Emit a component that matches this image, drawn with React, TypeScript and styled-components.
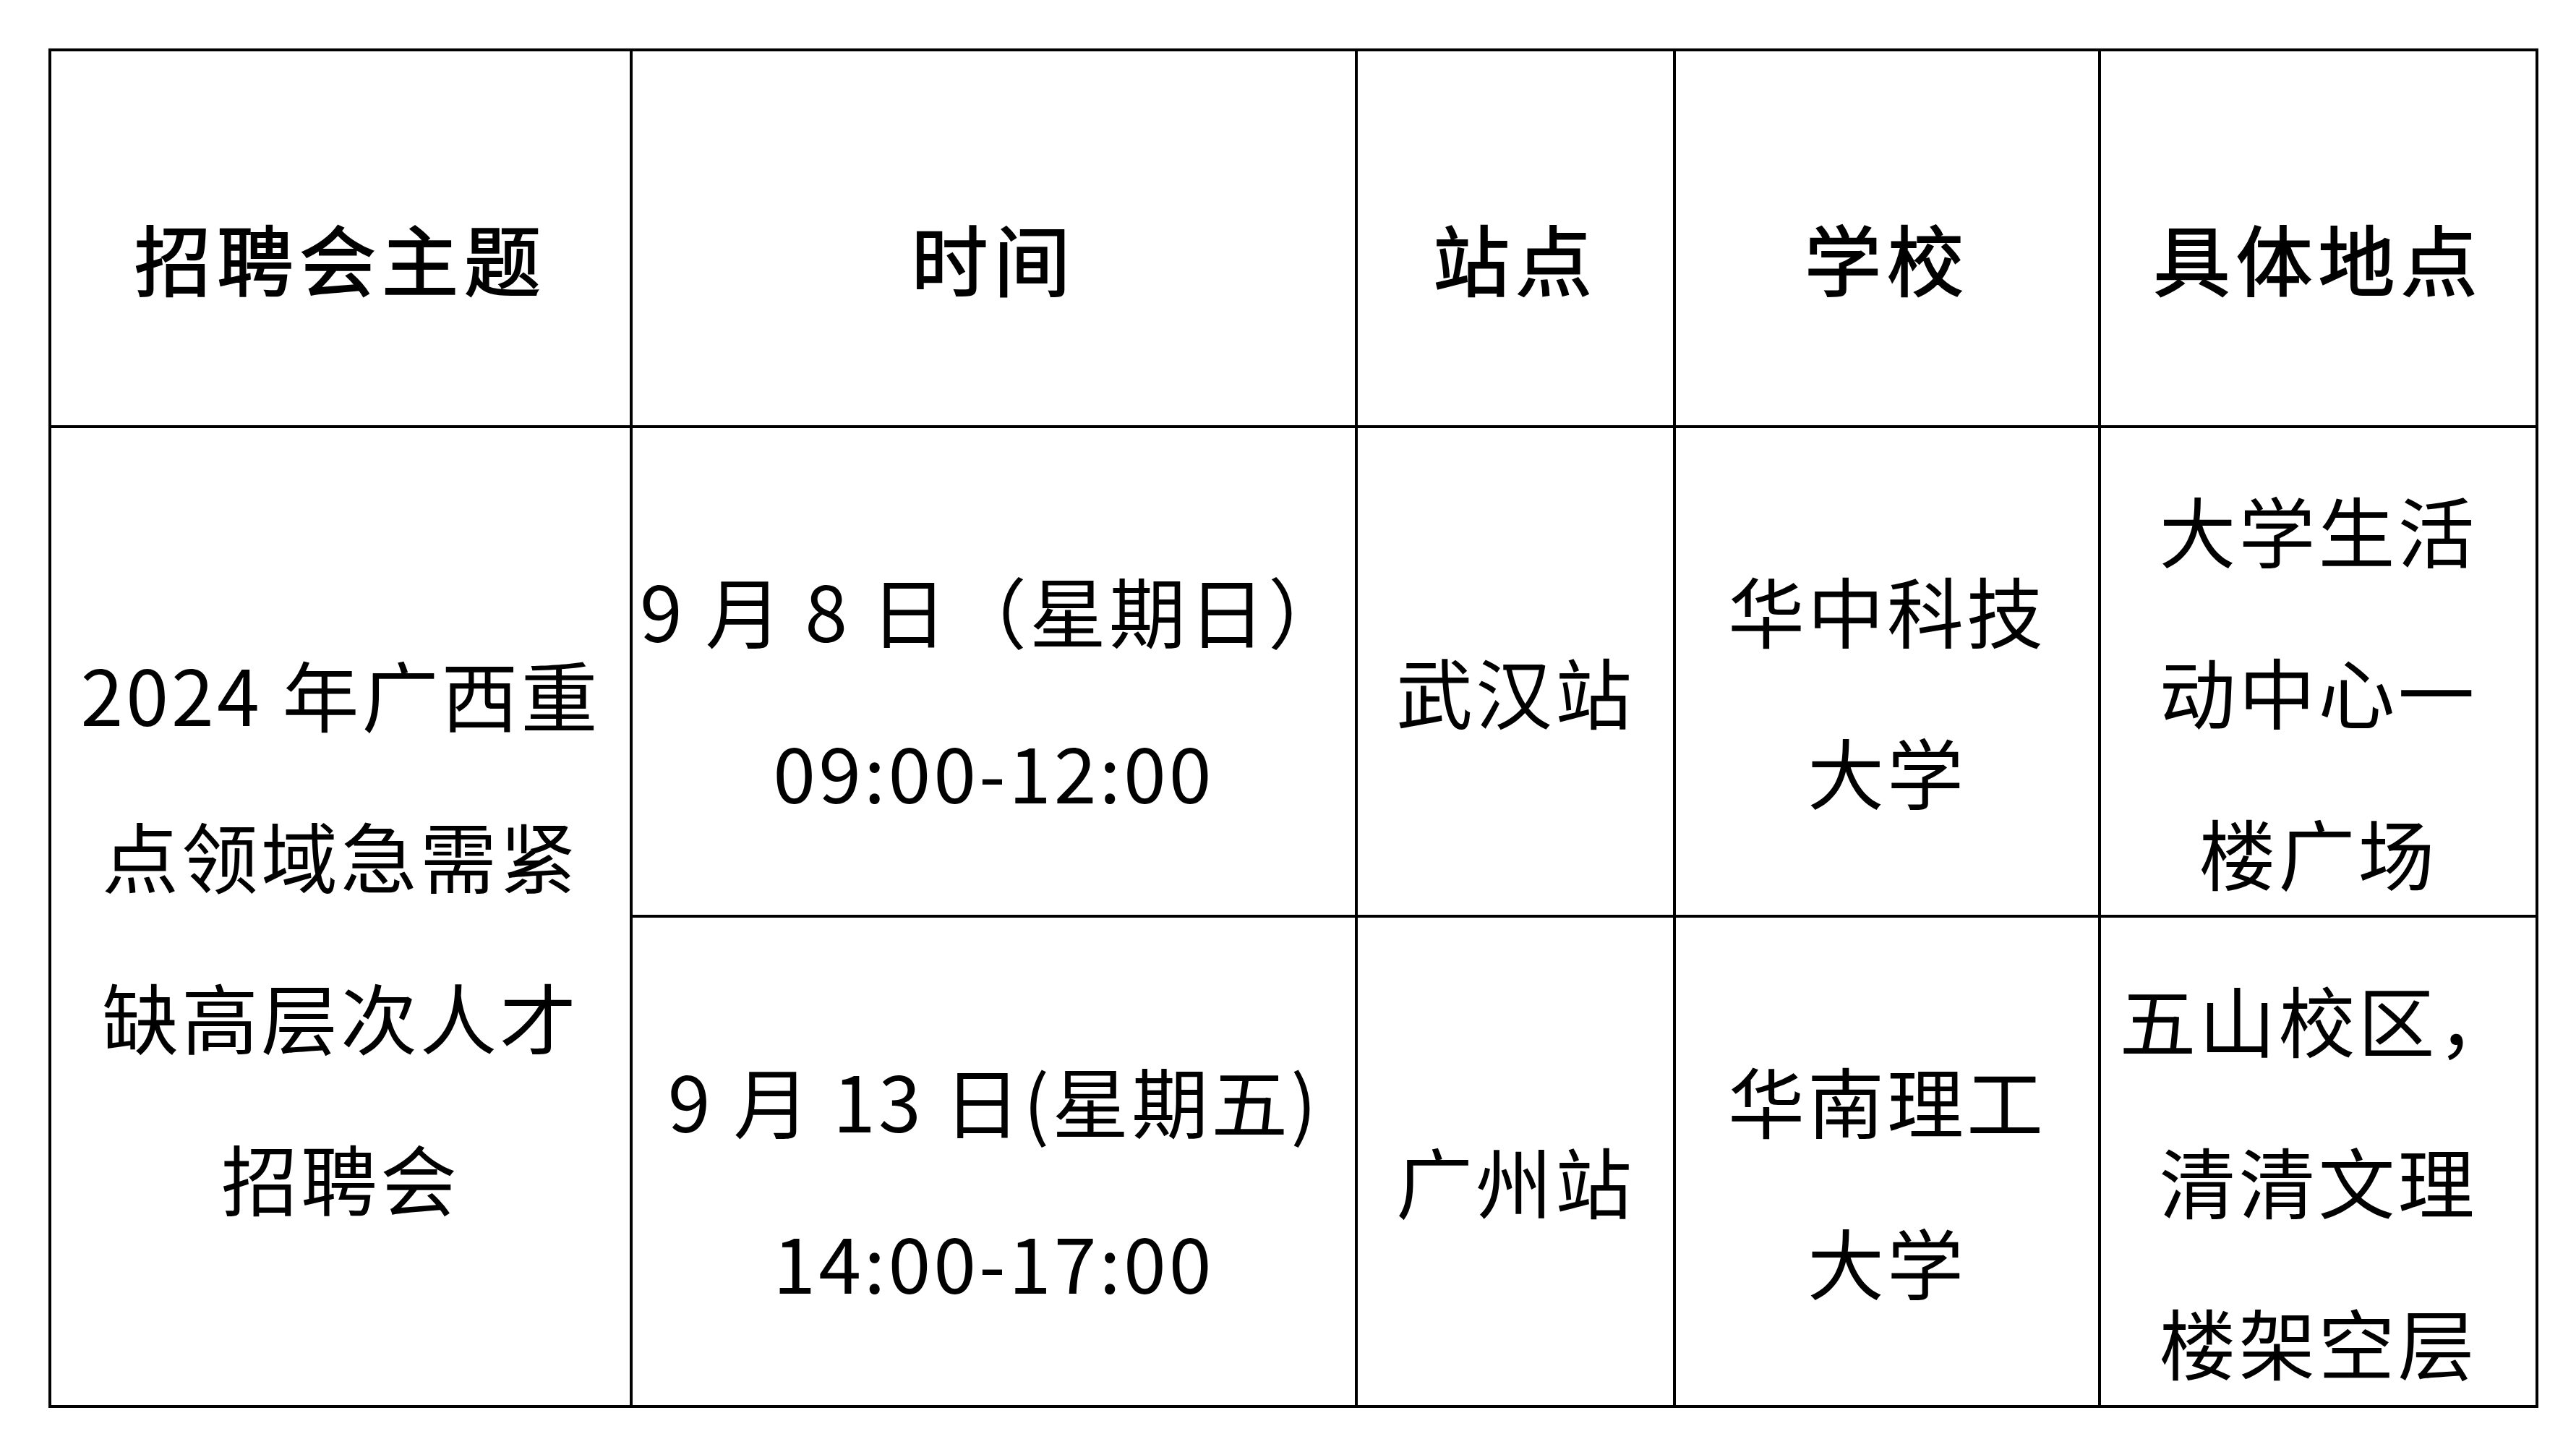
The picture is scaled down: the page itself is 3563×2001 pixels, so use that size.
import React from 'react';
import styled, { createGlobalStyle } from 'styled-components';

const GlobalStyle = createGlobalStyle`
  html, body {
    margin: 0;
    padding: 0;
    background: #ffffff;
  }
  body {
    font-family: "Noto Sans CJK SC", "Noto Sans", sans-serif;
    color: #000000;
  }
`;

const Page = styled.div`
  padding: 67px;
  background: #ffffff;
`;

// grid lines are the black background showing through the gaps
const Table = styled.div`
  display: grid;
  width: max-content;
  grid-template-columns: 800px 999px 436px 584px 601px;
  grid-template-rows: 517px 673px 674px;
  gap: 4px;
  padding: 4px;
  background: #000000;
`;

const Cell = styled.div<{ $span?: number; $header?: boolean }>`
  grid-row: ${props => (props.$span ? `span ${props.$span}` : 'auto')};
  background: #ffffff;
  display: flex;
  flex-direction: column;
  align-items: center;
  justify-content: center;
  gap: 113px;
  padding-top: 50px;
  box-sizing: border-box;
  font-size: 106px;
  font-weight: 400;
  -webkit-text-stroke: ${props => (props.$header ? '2px #000' : '0')};
  letter-spacing: ${props => (props.$header ? '8px' : '4px')};
  text-align: center;
  white-space: nowrap;
`;

const Line = styled.span`
  display: block;
  line-height: 110px;
`;

interface CellData {
  lines: string[];
  span?: number;
}

const headers = ['招聘会主题', '时间', '站点', '学校', '具体地点'];

const rows: CellData[][] = [
  [
    { lines: ['2024 年广西重', '点领域急需紧', '缺高层次人才', '招聘会'], span: 2 },
    { lines: ['9 月 8 日（星期日）', '09:00-12:00'] },
    { lines: ['武汉站'] },
    { lines: ['华中科技', '大学'] },
    { lines: ['大学生活', '动中心一', '楼广场'] },
  ],
  [
    { lines: ['9 月 13 日(星期五)', '14:00-17:00'] },
    { lines: ['广州站'] },
    { lines: ['华南理工', '大学'] },
    { lines: ['五山校区，', '清清文理', '楼架空层'] },
  ],
];

export default function App() {
  return (
    <>
      <GlobalStyle />
      <Page>
        <Table>
          {headers.map(h => (
            <Cell key={h} $header>
              <Line>{h}</Line>
            </Cell>
          ))}
          {rows.map((row, ri) =>
            row.map((cell, ci) => (
              <Cell key={`${ri}-${ci}`} $span={cell.span}>
                {cell.lines.map((l, li) => (
                  <Line key={li}>{l}</Line>
                ))}
              </Cell>
            ))
          )}
        </Table>
      </Page>
    </>
  );
}
